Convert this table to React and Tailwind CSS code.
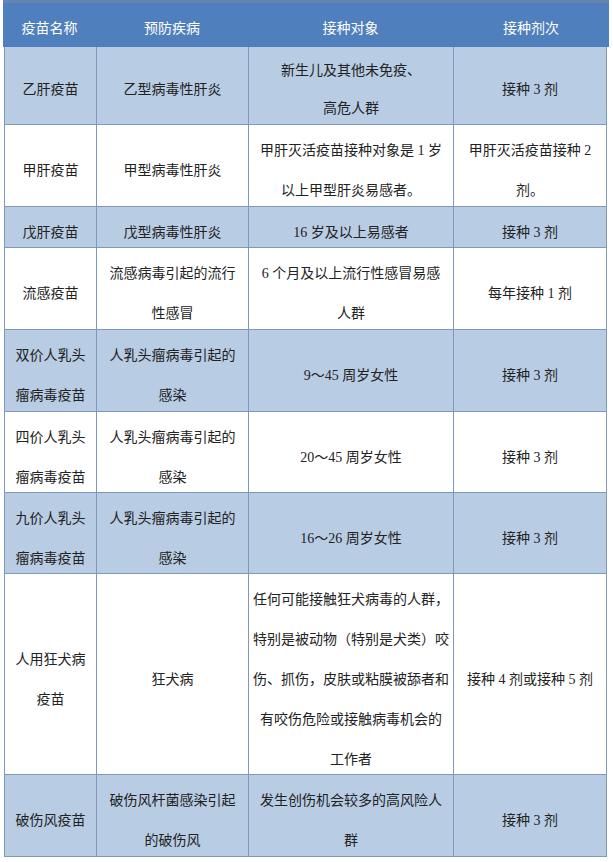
const rows = [
  {
    bg: "bg-[#b8cce4]",
    line: "h-[38px]",
    pad: "pb-px",
    cells: [["乙肝疫苗"], ["乙型病毒性肝炎"], ["新生儿及其他未免疫、", "高危人群"], ["接种 3 剂"]],
  },
  {
    bg: "bg-white",
    line: "h-[40px]",
    pad: "pb-px",
    cells: [
      ["甲肝疫苗"],
      ["甲型病毒性肝炎"],
      ["甲肝灭活疫苗接种对象是 1 岁", "以上甲型肝炎易感者。"],
      ["甲肝灭活疫苗接种 2", "剂。"],
    ],
  },
  {
    bg: "bg-[#b8cce4]",
    line: "h-[40px]",
    pad: "",
    cells: [["戊肝疫苗"], ["戊型病毒性肝炎"], ["16 岁及以上易感者"], ["接种 3 剂"]],
  },
  {
    bg: "bg-white",
    line: "h-[40px]",
    pad: "pb-px",
    cells: [
      ["流感疫苗"],
      ["流感病毒引起的流行", "性感冒"],
      ["6 个月及以上流行性感冒易感", "人群"],
      ["每年接种 1 剂"],
    ],
  },
  {
    bg: "bg-[#b8cce4]",
    line: "h-[40px]",
    pad: "pb-px",
    cells: [["双价人乳头", "瘤病毒疫苗"], ["人乳头瘤病毒引起的", "感染"], ["9～45 周岁女性"], ["接种 3 剂"]],
  },
  {
    bg: "bg-white",
    line: "h-[40px]",
    pad: "",
    cells: [["四价人乳头", "瘤病毒疫苗"], ["人乳头瘤病毒引起的", "感染"], ["20～45 周岁女性"], ["接种 3 剂"]],
  },
  {
    bg: "bg-[#b8cce4]",
    line: "h-[40px]",
    pad: "",
    cells: [["九价人乳头", "瘤病毒疫苗"], ["人乳头瘤病毒引起的", "感染"], ["16～26 周岁女性"], ["接种 3 剂"]],
  },
  {
    bg: "bg-white",
    line: "h-[40px]",
    pad: "",
    cells: [
      ["人用狂犬病", "疫苗"],
      ["狂犬病"],
      [
        "任何可能接触狂犬病毒的人群，",
        "特别是被动物（特别是犬类）咬",
        "伤、抓伤，皮肤或粘膜被舔者和",
        "有咬伤危险或接触病毒机会的",
        "工作者",
      ],
      ["接种 4 剂或接种 5 剂"],
    ],
  },
  {
    bg: "bg-[#b8cce4]",
    line: "h-[40px]",
    pad: "pb-px",
    cells: [
      ["破伤风疫苗"],
      ["破伤风杆菌感染引起", "的破伤风"],
      ["发生创伤机会较多的高风险人", "群"],
      ["接种 3 剂"],
    ],
  },
];

const headers = ["疫苗名称", "预防疾病", "接种对象", "接种剂次"];

function Cell({ lines, line, pad, last }) {
  return (
    <div
      className={`flex flex-col justify-center ${pad} ${
        last ? "" : "border-r border-[#8098bb]"
      }`}
    >
      {lines.map((t, i) => (
        <div
          key={i}
          className={`${line} flex items-end justify-center whitespace-nowrap pb-1 leading-5`}
        >
          {t}
        </div>
      ))}
    </div>
  );
}

export default function App() {
  return (
    <div
      className="w-[613px] h-[862px] overflow-hidden bg-white pl-[3px] text-[14px] text-[#222]"
      style={{ fontFamily: '"Liberation Serif", "Noto Sans CJK SC", serif' }}
    >
      {/* header */}
      <div className="grid h-[47px] w-[606px] grid-cols-[93px_152px_205px_156px] border-t-[3px] border-[#6585b0] bg-[#4f7fbd] text-white">
        {headers.map((h) => (
          <div key={h} className="pt-[16px] text-center leading-5">
            {h}
          </div>
        ))}
      </div>

      {/* body */}
      <div className="ml-px w-[603px] border-x border-[#8098bb]">
        {rows.map((r, i) => (
          <div
            key={i}
            className={`grid grid-cols-[92px_152px_205px_152px] border-b border-[#8098bb] ${r.bg}`}
          >
            {r.cells.map((c, j) => (
              <Cell key={j} lines={c} line={r.line} pad={r.pad} last={j === 3} />
            ))}
          </div>
        ))}
      </div>
    </div>
  );
}
